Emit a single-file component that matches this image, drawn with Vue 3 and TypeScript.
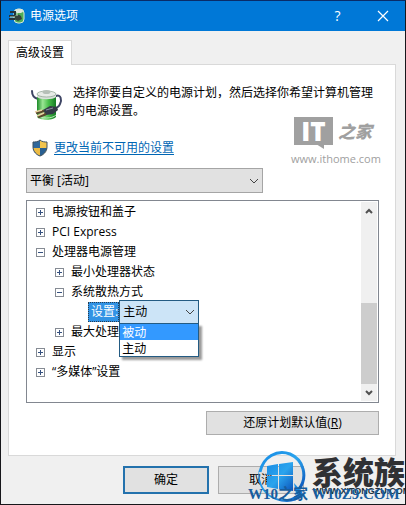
<script setup lang="ts">
import { ref } from 'vue'

interface TreeRow {
  label: string
  level: number
  open: boolean
}

const plan = ref('平衡 [活动]')
const cooling = ref('主动')
const coolingOptions = ['被动', '主动']
const highlighted = ref('被动')

const rowsBefore: TreeRow[] = [
  { label: '电源按钮和盖子', level: 1, open: false },
  { label: 'PCI Express', level: 1, open: false },
  { label: '处理器电源管理', level: 1, open: true },
  { label: '最小处理器状态', level: 2, open: false },
  { label: '系统散热方式', level: 2, open: true },
]
const rowsAfter: TreeRow[] = [
  { label: '最大处理器状态', level: 2, open: false },
  { label: '显示', level: 1, open: false },
  { label: '“多媒体”设置', level: 1, open: false },
]
</script>

<template>
  <main class="window">
    <header class="titlebar">
      <svg class="title-icon" viewBox="0 0 16 16" aria-hidden="true">
        <rect x="5" y="1" width="10" height="14" rx="4" fill="#4fae57" stroke="#d5e8d8" />
        <ellipse cx="10" cy="3" rx="4" ry="2" fill="#dfe8df" />
        <path d="M6 8c2-2 4-2 6 0l1 3-4 2-4-2z" fill="#33413c" />
        <path d="M1 4h5v3M0 8h6M0 11h6" fill="none" stroke="#26343c" stroke-width="2" />
        <path d="M1 9h5M8 5v3" stroke="#c9dfbd" />
      </svg>
      <h1>电源选项</h1>
      <button class="caption help" aria-label="帮助">?</button>
      <button class="caption" aria-label="关闭">
        <svg width="12" height="12" viewBox="0 0 12 12"><path d="M1 1l10 10M11 1L1 11" stroke="#fff" stroke-width="1.2" /></svg>
      </button>
    </header>

    <div class="body">
      <div class="tabs" role="tablist">
        <button class="tab" role="tab" aria-selected="true">高级设置</button>
      </div>
      <section class="panel">
        <div class="intro">
          <svg class="battery" viewBox="0 0 32 32" aria-hidden="true">
            <defs>
              <linearGradient id="cell" x1="0" x2="1">
                <stop offset="0" stop-color="#1c8b27" />
                <stop offset=".3" stop-color="#9be595" />
                <stop offset=".6" stop-color="#49c04b" />
                <stop offset="1" stop-color="#137a24" />
              </linearGradient>
            </defs>
            <path d="M1 2c0 5 2 7 6 8M25 7c5-2 6 4 4 8-1 3-3 4-7 5" fill="none" stroke="#3e4564" stroke-width="2" stroke-linecap="round" />
            <path d="M6 5v22c0 5 19 5 19 0V5z" fill="url(#cell)" />
            <path d="M6 5v3c3 3 16 3 19 0V5z" fill="#d8dfda" />
            <ellipse cx="15.500" cy="5" rx="9.500" ry="3" fill="#e7ebe7" stroke="#8aa08e" stroke-width=".7" />
            <ellipse cx="15.500" cy="3" rx="4" ry="2" fill="#b5bfb7" />
            <path d="M6 26c4 4 15 4 19 0" fill="none" stroke="#b8e7b6" />
            <path d="M12 21l7-4 7 1 1 3-5 4-7 1z" fill="#343a48" />
            <path d="M15 21l7-2" stroke="#8b94a3" />
            <path d="M5 24l8-2M7 28l8-3" stroke="#59472b" stroke-width="2.500" />
            <path d="M4 23l7-2M6 27l7-3" stroke="#e6d0a0" stroke-width="1.500" />
          </svg>
          <p>选择你要自定义的电源计划，然后选择你希望计算机管理的电源设置。</p>
        </div>

        <div class="admin">
          <svg class="shield" viewBox="0 0 16 18" aria-hidden="true">
            <path d="M8 1C6 3 3 3 1 3v5c0 5 4 8 7 9z" fill="#31689b" />
            <path d="M8 1c2 2 5 2 7 2v5c0 5-4 8-7 9z" fill="#f3c44d" />
            <path d="M1 9h7v8C5 16 2 13 1 9z" fill="#edbb43" />
            <path d="M8 9h7c-1 4-4 7-7 8z" fill="#285f91" />
            <path d="M8 1C6 3 3 3 1 3v5c0 5 4 8 7 9 3-1 7-4 7-9V3c-2 0-5 0-7-2z" fill="none" stroke="#3c5062" />
          </svg>
          <a href="#">更改当前不可用的设置</a>
        </div>

        <div class="combo plan">
          <select v-model="plan" aria-label="电源计划"><option>平衡 [活动]</option></select>
          <svg class="arrow" viewBox="0 0 10 6"><path d="M1 1l4 4 4-4" /></svg>
        </div>

        <div class="tree">
          <div class="rows" role="tree">
            <div v-for="row in rowsBefore" :key="row.label" class="row" :class="{ child: row.level === 2 }" role="treeitem" :aria-expanded="row.open">
              <svg class="toggle" viewBox="0 0 9 9"><rect x=".5" y=".5" width="8" height="8" /><path d="M2 4.500h5" /><path v-if="!row.open" d="M4.500 2v5" /></svg>
              <span>{{ row.label }}</span>
            </div>
            <div class="row setting" role="treeitem">
              <label for="cooling">设置:</label>
              <div class="combo cooling">
                <select id="cooling" v-model="cooling">
                  <option v-for="option in coolingOptions" :key="option">{{ option }}</option>
                </select>
                <svg class="arrow" viewBox="0 0 10 6"><path d="M1 1l4 4 4-4" /></svg>
                <ul class="options" role="listbox" aria-label="系统散热方式">
                  <li v-for="option in coolingOptions" :key="option" role="option" :class="{ active: option === highlighted }" :aria-selected="option === highlighted" @mouseenter="highlighted = option" @click="cooling = option">{{ option }}</li>
                </ul>
              </div>
            </div>
            <div v-for="row in rowsAfter" :key="row.label" class="row" :class="{ child: row.level === 2 }" role="treeitem" :aria-expanded="row.open">
              <svg class="toggle" viewBox="0 0 9 9"><rect x=".5" y=".5" width="8" height="8" /><path d="M2 4.500h5" /><path v-if="!row.open" d="M4.500 2v5" /></svg>
              <span>{{ row.label }}</span>
            </div>
          </div>
          <div class="scrollbar">
            <button aria-label="向上滚动"><svg viewBox="0 0 8 6"><path d="M1 5l3-3 3 3" /></svg></button>
            <div class="track"><div class="thumb"></div></div>
            <button aria-label="向下滚动"><svg viewBox="0 0 8 6"><path d="M1 1l3 3 3-3" /></svg></button>
          </div>
        </div>

        <div class="restore"><button class="push">还原计划默认值(<u>R</u>)</button></div>

        <div class="ithome">
          <div class="ithome-logo">
            <div class="bubble">IT</div>
            <span class="brush">之家</span>
          </div>
          <div class="ithome-url">www.ithome.com</div>
        </div>
      </section>
    </div>

    <footer class="actions">
      <button class="push primary">确定</button>
      <button class="push">取消</button>
    </footer>

    <div class="brand">
      <svg class="brand-logo" viewBox="0 0 50 52" aria-hidden="true">
        <defs>
          <linearGradient id="ring" x1="0" y1="0" x2="1" y2="1">
            <stop offset="0" stop-color="#168be5" />
            <stop offset=".5" stop-color="#2ba4ed" />
            <stop offset="1" stop-color="#0b54bb" />
          </linearGradient>
        </defs>
        <path d="M3 22C6 7 20-1 33 4c14 6 18 23 9 35" fill="none" stroke="url(#ring)" stroke-width="3" />
        <path d="M2 20c0 14 6 24 17 28 9 3 18 1 25-7l2 5c-8 7-18 7-27 4C6 45-1 33 2 20z" fill="url(#ring)" />
        <path d="M37 33l8 9 2 5-8-3z" fill="#168be5" />
        <path d="M10 16l11-2v11H10zM22 14l14-2v13H22zM10 26h11v13l-11-2zM22 26h14v15l-14-2z" fill="url(#ring)" />
      </svg>
      <div class="brand-name">系统族</div>
      <div class="brand-url">WWW.XITONGZU.COM</div>
      <div class="site">W10之家 W10Z9.COM</div>
    </div>
  </main>
</template>

<style>
body { margin: 0; }
</style>

<style scoped>
* { box-sizing: border-box; }
.window {
  position: relative;
  display: flex;
  flex-direction: column;
  min-height: 100vh;
  overflow: hidden;
  border: 1px solid #17171b;
  border-top-color: #092c69;
  background: #f0f0f0;
  color: #000;
  font: 12px/18px "Open Sans", "Noto Sans CJK SC", sans-serif;
}
button, select { font: inherit; color: inherit; margin: 0; border-radius: 0; }
.titlebar { display: flex; align-items: center; height: 30px; padding-left: 8px; background: #0078d7; color: #fff; }
.title-icon { width: 16px; height: 16px; margin-right: 5px; }
h1 { flex: 1; margin: 0; font-size: 12px; line-height: 18px; font-weight: 400; }
.caption { display: grid; place-items: center; width: 45px; height: 30px; padding: 0; border: 0; background: none; }
.help { font-size: 14px; }
.body { padding: 9px 9px 0 7px; }
.tabs { display: flex; }
.tab { position: relative; z-index: 1; height: 25px; margin-bottom: -1px; padding: 0 7px; border: 1px solid #d9d9d9; border-bottom: 0; background: #fff; }
.panel { position: relative; padding: 19px 16px 20px 17px; border: 1px solid #d9d9d9; background: #fff; }
.intro { display: flex; gap: 10px; height: 50px; padding: 0 1px 0 5px; }
.battery { flex: none; width: 32px; height: 34px; margin-top: 4px; }
.intro p { margin: 0; }
.admin { display: flex; align-items: center; gap: 6px; height: 28px; padding-left: 6px; }
.shield { width: 16px; height: 18px; }
a { color: #0066b4; text-underline-offset: 2px; }
.combo { position: relative; display: grid; align-items: center; }
.combo select { grid-area: 1 / 1; width: 100%; appearance: none; padding: 0 20px 0 3px; border: 1px solid #a5a5a5; background: #e1e1e1; outline: 0; }
.arrow { grid-area: 1 / 1; justify-self: end; width: 10px; height: 6px; margin-right: 4px; fill: none; stroke: #444; pointer-events: none; }
.plan { width: 67%; margin-top: 6px; }
.plan select { height: 25px; }
.tree { display: flex; height: 203px; margin-top: 7px; border: 1px solid #828790; }
.rows { flex: 1; padding-top: 1px; }
.row { display: flex; align-items: center; height: 20px; padding-left: 9px; gap: 7px; white-space: nowrap; }
.child { padding-left: 28px; }
.toggle { flex: none; width: 9px; height: 9px; fill: #fff; stroke: #858b94; }
.toggle path { stroke: #35507f; }
.setting { padding-left: 61px; gap: 0; }
.setting label { height: 20px; padding: 0 0 0 2px; border: 1px dotted #263c51; background: #3293e4; color: #fff; }
.cooling { z-index: 2; width: 80px; }
.cooling select { height: 24px; border-color: #235b83; background: #cce4f7; }
.options { position: absolute; top: 23px; left: 0; width: 100%; margin: 0; padding: 0; border: 1px solid #235b83; background: #fff; box-shadow: 3px 3px 2px #0006; list-style: none; }
.options li { height: 16px; padding-left: 2px; line-height: 18px; }
.options .active { background: #3399ff; color: #fff; }
.scrollbar { display: flex; flex-direction: column; width: 16px; margin: 1px; background: #f0f0f0; }
.scrollbar button { display: grid; place-items: center; height: 17px; padding: 0; border: 0; background: none; }
.scrollbar svg { width: 8px; height: 6px; fill: none; stroke: #505050; stroke-width: 2; }
.track { display: flex; flex: 1; flex-direction: column; justify-content: flex-end; }
.thumb { height: 49%; background: #cdcdcd; }
.push { padding: 0; border: 1px solid #adadad; background: #e1e1e1; }
.restore { display: flex; justify-content: flex-end; margin-top: 8px; }
.restore .push { width: 173px; height: 24px; }
.actions { display: flex; justify-content: flex-end; gap: 9px; padding: 10px 101px 9px 0; }
.actions .push { width: 86px; height: 28px; }
.actions .primary { border: 2px solid #2472ad; }
.ithome { position: absolute; top: 52px; right: 14px; width: 90px; color: #a0a0a0; }
.ithome-logo { display: flex; gap: 5px; padding-left: 3px; }
.bubble { position: relative; width: 39px; height: 28px; background: #a0a0a0; color: #fff; font: 800 26px/28px "Open Sans", sans-serif; text-align: center; }
.bubble::after { position: absolute; left: 22px; top: 27px; border-top: 5px solid #a0a0a0; border-left: 8px solid transparent; content: ""; }
.brush { font: italic 900 17px/28px "Noto Sans CJK SC", sans-serif; white-space: nowrap; }
.ithome-url { padding-top: 4px; font-size: 11px; line-height: 20px; }
.brand { position: absolute; right: 0; bottom: 0; width: 157px; height: 56px; pointer-events: none; }
.brand-logo { position: absolute; left: 9px; top: 2px; width: 50px; height: 52px; }
.brand-name { position: absolute; left: 64px; top: 5px; color: #303134; font: 900 31px/36px "Noto Sans CJK SC", sans-serif; white-space: nowrap; }
.brand-url { position: absolute; left: 65px; top: 37px; color: #26323d; font: 700 9px/12px "Liberation Sans", sans-serif; white-space: nowrap; }
.site { position: absolute; left: 0; top: 36px; color: #185d9e; font: 700 15px/20px "Liberation Serif", "Noto Sans CJK SC", serif; white-space: nowrap; }
</style>
